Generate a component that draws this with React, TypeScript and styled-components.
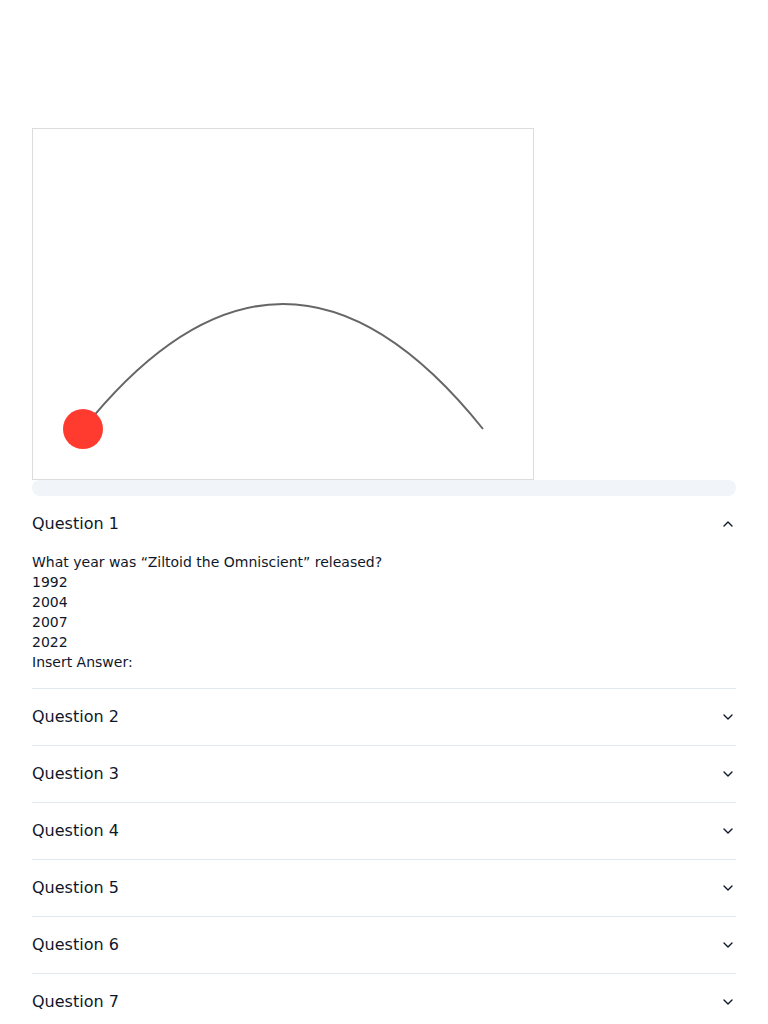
import styled, {createGlobalStyle} from "styled-components";
import {ChevronDown} from "lucide-react";
import {useState} from "react";

const GlobalStyle = createGlobalStyle`
  body {
    margin: 0;
    background: #ffffff;
    font-family: "DejaVu Sans", "Noto Sans", sans-serif;
    color: #0f172a;
  }
`;

const questions = [
    {
        title: "Question 1",
        text: "What year was “Ziltoid the Omniscient” released?",
        answers: ["1992", "2004", "2007", "2022"],
    },
    {title: "Question 2", text: "", answers: []},
    {title: "Question 3", text: "", answers: []},
    {title: "Question 4", text: "", answers: []},
    {title: "Question 5", text: "", answers: []},
    {title: "Question 6", text: "", answers: []},
    {title: "Question 7", text: "", answers: []},
];

export default function App() {
    const [open, setOpen] = useState<number | null>(0);
    const progress = 0;

    return <>
        <GlobalStyle/>
        <Page>
            <Stage>
                <svg width="500" height="350" viewBox="0 0 500 350">
                    <path d="M50 300 Q250 50 450 300" fill="none" stroke="#666666" strokeWidth="2"/>
                    <circle cx="50" cy="300" r="20" fill="#ff3b30"/>
                </svg>
            </Stage>
            <Progress>
                <div style={{width: `${progress}%`}}/>
            </Progress>
            <Accordion>
                {questions.map((q, i) => (
                    <Item key={q.title}>
                        <Trigger onClick={() => setOpen(open === i ? null : i)} $open={open === i}>
                            {q.title}
                            <ChevronDown size={16} strokeWidth={2}/>
                        </Trigger>
                        {open === i && (
                            <Content>
                                <div>{q.text}</div>
                                {q.answers.map(a => <div key={a}>{a}</div>)}
                                <div>Insert Answer:</div>
                            </Content>
                        )}
                    </Item>
                ))}
            </Accordion>
        </Page>
    </>
}

const Page = styled.div`
  display: flex;
  flex-direction: column;
  padding: 128px 32px 32px;
`;

const Stage = styled.div`
  width: 500px;
  height: 350px;
  border: 1px solid #dcdcdc;

  svg {
    display: block;
  }
`;

const Progress = styled.div`
  height: 16px;
  border-radius: 9999px;
  background: #f1f5f9;
  overflow: hidden;

  div {
    height: 100%;
    background: #0f172a;
  }
`;

const Accordion = styled.div`
  display: flex;
  flex-direction: column;
`;

const Item = styled.div`
  border-bottom: 1px solid #e2e8f0;
`;

const Trigger = styled.button<{ $open: boolean }>`
  display: flex;
  width: 100%;
  align-items: center;
  justify-content: space-between;
  padding: 16px 0;
  border: 0;
  background: none;
  font-family: inherit;
  font-size: 16px;
  line-height: 24px;
  color: #0f172a;
  text-align: left;
  cursor: pointer;

  svg {
    flex-shrink: 0;
    transform: rotate(${p => p.$open ? 180 : 0}deg);
  }
`;

const Content = styled.div`
  padding-bottom: 16px;
  font-size: 14px;
  line-height: 20px;
  color: #0f172a;
`;
